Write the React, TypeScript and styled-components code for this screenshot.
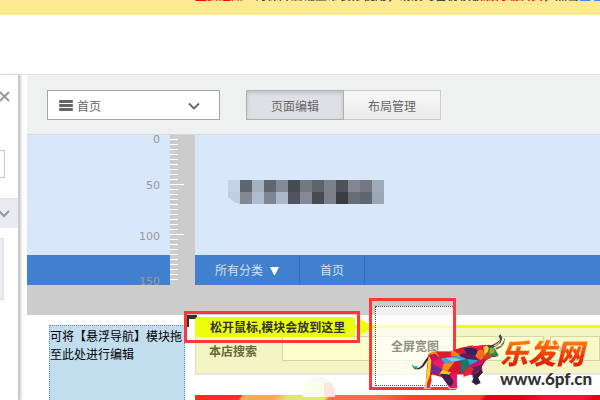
import React from "react";
import styled, { createGlobalStyle } from "styled-components";

const GlobalStyle = createGlobalStyle`
  *, *::before, *::after { box-sizing: border-box; }
  body {
    margin: 0;
    background: #fff;
    color: #555;
    font: 12px/18px "Liberation Sans", "Noto Sans CJK SC", sans-serif;
  }
  button, input, select { font: inherit; color: inherit; }
`;

const Page = styled.div`
  display: flex;
  flex-direction: column;
  height: 100vh;
  overflow: hidden;
`;

const Notice = styled.div`
  flex: none;
  height: 15px;
  padding-left: 195px;
  overflow: hidden;
  background: #ffea94;
  white-space: nowrap;
`;

const NoticeText = styled.p`
  margin: -13px 0 0;
  font-weight: bold;
  line-height: 18px;
  color: #444;
  em { color: #f00; font-style: normal; }
  a { color: #3d8be8; text-decoration: none; }
`;

const Header = styled.header`
  flex: none;
  height: 60px;
  border-bottom: 1px solid #e3e3e3;
`;

const Body = styled.div`
  display: flex;
  flex: 1;
  min-height: 0;
`;

const Sidebar = styled.aside`
  display: flex;
  flex: none;
  flex-direction: column;
  width: 20px;
  margin-right: 7px;
  border-right: 2px solid #c9c9c9;
  box-shadow: 1px 0 3px #ccc;
`;

const CloseButton = styled.button`
  display: flex;
  width: 11px;
  height: 11px;
  margin: 16px 0 48px;
  padding: 0;
  border: 0;
  background: none;
`;

const SideInput = styled.input`
  width: 5px;
  height: 28px;
  padding: 0;
  border: 1px solid #ccc;
  border-left: 0;
`;

const SideSection = styled.button`
  display: flex;
  align-items: center;
  width: 100%;
  height: 30px;
  margin: 20px 0 10px;
  padding: 0;
  border: 0;
  border-top: 1px solid #dcdde6;
  background: #ebecf1;
`;

const SideCard = styled.div`
  width: 4px;
  height: 62px;
  border: 1px solid #dcdde6;
  border-left: 0;
  background: #ebecf1;
`;

const Main = styled.main`
  display: flex;
  flex: 1;
  flex-direction: column;
  min-width: 0;
`;

const Toolbar = styled.div`
  display: flex;
  flex: none;
  align-items: center;
  gap: 26px;
  height: 60px;
  padding: 0 20px;
  border-bottom: 1px solid #d5d7de;
  background: #eff1f1;
`;

const PagePicker = styled.label`
  display: flex;
  align-items: center;
  gap: 4px;
  width: 173px;
  height: 30px;
  padding: 2px 19px 0 11px;
  border: 1px solid #a3a6a6;
  background: #fff;
`;

const Picker = styled.select`
  flex: 1;
  min-width: 0;
  padding: 2px 0 0;
  border: 0;
  appearance: none;
  background: none;
  color: #666;
`;

const Modes = styled.div`
  display: flex;
`;

const ModeButton = styled.button<{ $active?: boolean }>`
  width: ${(p) => (p.$active ? 98 : 97)}px;
  height: 30px;
  padding: 4px 0 0;
  border: 1px solid ${(p) => (p.$active ? "#aeb0b5" : "#ccc")};
  border-left-width: ${(p) => (p.$active ? 1 : 0)}px;
  background: ${(p) => (p.$active ? "#dfe0e5" : "linear-gradient(#f8f8f8, #ebebeb)")};
  box-shadow: ${(p) => (p.$active ? "inset 0 2px 4px #bfc1c6" : "none")};
  color: #666;
`;

const Stage = styled.section`
  display: grid;
  flex: none;
  grid-template-columns: 143px 25px 1fr;
  height: 180px;
  padding-bottom: 30px;
  background: #ccc;
`;

const Column = styled.div`
  position: relative;
  display: flex;
  flex-direction: column;
  min-width: 0;
  overflow: hidden;
  background: #d8e7fa;
`;

const Banner = styled.div`
  flex: 1;
  padding: 45px 33px;
`;

const NavBar = styled.nav`
  display: flex;
  height: 30px;
  background: #4080cf;
`;

const NavLink = styled.a`
  display: flex;
  align-items: center;
  gap: 7px;
  padding: 2px 20px 0;
  border-right: 1px solid #3570bd;
  color: #cfe0f5;
  text-decoration: none;
`;

const RulerLabel = styled.span<{ $at: number }>`
  position: absolute;
  top: ${(p) => p.$at}px;
  right: 10px;
  color: #999;
  font: 11px/12px "DejaVu Sans", sans-serif;
`;

const Ruler = styled.div`
  background:
    linear-gradient(#fff, #fff) 0 49px / 14px 1px no-repeat,
    linear-gradient(#fff, #fff) 0 99px / 14px 1px no-repeat,
    repeating-linear-gradient(transparent 0 4px, #fff 4px 5px) 0 0 / 8px 145px no-repeat;
`;

const Work = styled.section`
  position: relative;
  display: flex;
  flex: 1;
  gap: 10px;
  min-height: 0;
  padding: 10px 0 0 22px;
`;

const FloatZone = styled.div`
  flex: none;
  width: 136px;
  border: 1px dotted #399bc9;
  border-bottom: 0;
  background: #c1ddee;
  color: #000;
  padding-top: 2px;
`;

const Modules = styled.div`
  display: flex;
  flex: 1;
  flex-direction: column;
  gap: 20px;
  min-width: 0;
`;

const SearchRow = styled.form`
  display: flex;
  flex: none;
  height: 50px;
  padding-top: 8px;
  border-top: 3px solid #ecff0a;
  border-bottom: 2px solid #e5e5e0;
  border-left: 1px solid #e9d7b5;
  background: #f3f6c4;
`;

const SearchLabel = styled.label`
  width: 86px;
  padding: 7px 0 0 13px;
  color: #67683a;
  font-weight: bold;
`;

const Field = styled.input<{ $grow?: boolean }>`
  flex: ${(p) => (p.$grow ? "1 1 0" : "0 0 50px")};
  min-width: 0;
  height: 25px;
  margin-right: ${(p) => (p.$grow ? 6 : 0)}px;
  padding: 0 6px;
  border: 1px solid #d4d6a8;
  background: ${(p) => (p.$grow ? "#fcfecb" : "#f6f9c8")};
  &::placeholder { color: #bfc19c; opacity: 1; }
`;

const Poster = styled.div`
  flex: none;
  height: 5px;
  background: linear-gradient(
    125deg,
    #ff2c1c 0 38px, #ffa94c 40px 66px, #dfe96b 78px 108px,
    #ff6a4c 112px 150px, #f7432b 180px 235px, #e10717 240px 270px,
    #ef1539 290px 320px, #e10717 330px
  );
`;

const Dome = styled.div`
  position: absolute;
  top: 62px;
  left: 276px;
  width: 32px;
  height: 20px;
  border-radius: 16px 16px 0 0;
  background: linear-gradient(#f8f8f4 0 6px, transparent 6px), linear-gradient(90deg, #f9ffe6 0 21px, #fce6dd 21px);
`;

const DropHint = styled.div`
  position: absolute;
  top: 2px;
  left: 168px;
  width: 160px;
  height: 20px;
  padding: 1px 0 0 15px;
  border-radius: 3px;
  background: #ecff0a;
  color: #333;
  font-weight: bold;
  line-height: 20px;
  white-space: nowrap;
`;

const Corner = styled.div`
  position: absolute;
  top: 0;
  left: 160px;
  width: 10px;
  height: 12px;
  border-top: 4px solid #333;
  border-left: 2px solid #333;
`;

const Arrow = styled.svg`
  position: absolute;
  top: 3px;
  left: 331px;
`;

const Mark = styled.div<{ $x: number; $y: number; $w: number; $h: number }>`
  position: absolute;
  top: ${(p) => p.$y}px;
  left: ${(p) => p.$x}px;
  width: ${(p) => p.$w}px;
  height: ${(p) => p.$h}px;
  border: 3px solid #ff373b;
`;

const DragCard = styled.div`
  position: absolute;
  top: -9px;
  left: 348px;
  width: 80px;
  height: 80px;
  border: 1px dotted #444;
  background: rgba(255, 255, 255, 0.7);
  color: #91927f;
  font-weight: bold;
  line-height: 80px;
  text-align: center;
`;

const Brand = styled.div`
  position: absolute;
  top: 10px;
  left: 383px;
  display: flex;
  align-items: flex-start;
`;

const BrandWords = styled.div`
  display: flex;
  flex-direction: column;
  margin-left: -10px;
  padding-top: 10px;
`;

const BrandName = styled.strong`
  background: linear-gradient(#ff7a12 20%, #ee3c08 60%, #d41600);
  background-clip: text;
  color: transparent;
  font: italic 900 28px/34px "Noto Sans CJK SC", sans-serif;
`;

const BrandUrl = styled.span`
  color: #333;
  font: 900 17px/20px Lato, sans-serif;
`;

const Chevron = () => (
  <svg width="12" height="8" viewBox="0 0 12 8" fill="none" stroke="#666" strokeWidth="1.8" aria-hidden="true">
    <path d="M1 1.5 6 6.5 11 1.5" />
  </svg>
);

const tiles = [
  ["#c5d3e6", "#60666f", "#a5b1c1", "#60666f", "#868a96", "#484b52", "#737981", "#5e646b", "#7b808a", "#4d5158", "#818692", "#747981", "#9fabba"],
  ["#c1cfe2", "#838893", "#afbbce", "#808593", "#acb7ca", "#52545d", "#858997", "#494b54", "#7b808a", "#3b3c40", "#676c75", "#60666f", "#9ba7b4"],
];

const Signboard = () => (
  <svg width="156" height="24" viewBox="0 0 156 24" shapeRendering="crispEdges" aria-hidden="true">
    {tiles.map((row, y) =>
      row.map((fill, x) => <rect key={`${x}-${y}`} x={x * 12} y={y * 12} width="12" height="12" fill={fill} />)
    )}
    <path d="M0 17 4 21 11 24H0Z" fill="#d8e7fa" />
  </svg>
);

const facets: [string, string][] = [
  ["#3b2330", "5,118 12,128 24,130 35,122 46,105 60,86 82,78 82,84 66,90 52,108 40,125 28,133 14,133"],
  ["#27a79a", "5,118 13,124 24,124 20,131 10,130"],
  ["#f08a1c", "56,84 80,78 102,82 88,99 66,106 54,130"],
  ["#c2155c", "56,90 76,86 90,100 68,112 62,148 50,138"],
  ["#e8262c", "50,136 62,146 65,166 58,190 45,190 51,166"],
  ["#fbd914", "56,92 64,106 60,150 52,172 50,190 45,190 50,150"],
  ["#e0192d", "78,80 130,80 122,94 90,100"],
  ["#ff7a20", "124,78 160,70 150,94 122,94"],
  ["#e51730", "128,76 152,68 192,60 176,72 148,88"],
  ["#35a8df", "92,100 150,92 176,102 132,110 104,116"],
  ["#84cbe2", "106,99 134,98 154,104 128,110"],
  ["#e91e6a", "88,100 106,116 96,140 66,128 70,108"],
  ["#752a8f", "68,116 100,134 84,148 62,146"],
  ["#f28a22", "100,116 134,110 118,140 96,138"],
  ["#d8142a", "134,110 160,122 142,148 110,142"],
  ["#fac51c", "96,136 124,142 110,154 88,148"],
  ["#17796c", "154,106 174,102 180,124 150,144"],
  ["#2d2460", "160,70 182,68 206,74 196,92 172,86"],
  ["#5d1a62", "148,88 172,84 196,94 206,108 180,106 150,94"],
  ["#20a8c9", "172,102 204,106 190,122 180,122"],
  ["#ec1f3a", "186,64 228,60 212,80 204,76"],
  ["#f36e21", "204,76 218,74 228,94 212,106 196,94"],
  ["#ffcf1a", "220,66 238,58 236,78 224,90"],
  ["#c4166d", "178,120 212,105 216,124 194,134 174,150"],
  ["#54205d", "186,128 216,120 212,134 196,142 200,158 188,158"],
  ["#30224e", "96,148 118,150 134,160 128,186 114,176"],
  ["#ed1564", "118,148 142,142 138,168 142,190 122,190 130,170"],
  ["#432052", "90,146 112,148 128,164 116,182 98,158"],
  ["#26233c", "194,150 212,134 218,142 204,158 212,174 198,180 188,166"],
  ["#e82136", "162,138 180,124 192,132 178,150 160,156"],
  ["#2e1f42", "194,166 204,172 196,178 184,170"],
  ["#46823b", "236,70 254,70 264,88 258,94 246,90 240,102 230,94"],
  ["#8dac39", "240,62 252,66 254,82 238,88"],
  ["#e53625", "234,84 242,96 226,104 218,96"],
  ["#2b8564", "246,90 262,84 266,92 256,96"],
  ["#47444b", "236,68 230,60 246,60 258,54 270,44 266,32 272,28 277,40 272,54 258,64 248,68"],
  ["#736f60", "256,68 272,62 282,46 281,38 285,42 282,56 272,68 258,74"],
  ["#e2d7a5", "250,62 264,54 272,44 268,55 256,64"],
];

const Bull = () => (
  <svg width="100" height="75" viewBox="0 0 300 225" aria-hidden="true">
    <path
      d="M54 88 80 78 130 78 160 68 226 58 242 60 262 85 258 97 244 98 228 108 217 126 220 142 206 158 212 174 198 181 184 170 194 154 180 150 142 150 142 190 118 190 96 158 66 150 60 190 44 190Z"
      fill="#c71847"
      stroke="#fff"
      strokeWidth="3"
    />
    {facets.map(([fill, points]) => (
      <polygon key={points} points={points} fill={fill} />
    ))}
  </svg>
);

export default function App() {
  return (
    <Page>
      <GlobalStyle />
      <Notice>
        <NoticeText>
          <em>重要通知：</em>为保障店铺正常装修使用，请及时备份模板<em>后再编辑页</em>，点击<a href="#help">查看详</a>
        </NoticeText>
      </Notice>
      <Header />
      <Body>
        <Sidebar>
          <CloseButton aria-label="关闭">
            <svg width="11" height="11" viewBox="0 0 11 11" stroke="#999" strokeWidth="2" aria-hidden="true">
              <path d="M0 1 9 10M9 1 0 10" />
            </svg>
          </CloseButton>
          <SideInput aria-label="搜索模块" />
          <SideSection aria-label="展开">
            <svg width="10" height="8" viewBox="0 0 10 8" fill="none" stroke="#999" strokeWidth="2" aria-hidden="true">
              <path d="M-1 1 4 6 9 1" />
            </svg>
          </SideSection>
          <SideCard />
        </Sidebar>
        <Main>
          <Toolbar>
            <PagePicker>
              <svg width="14" height="11" viewBox="0 0 14 11" fill="#666" aria-hidden="true">
                <rect width="14" height="3" rx="1" />
                <rect y="4" width="14" height="3" rx="1" />
                <rect y="8" width="14" height="3" rx="1" />
              </svg>
              <Picker aria-label="页面">
                <option>首页</option>
              </Picker>
              <Chevron />
            </PagePicker>
            <Modes>
              <ModeButton type="button" $active>页面编辑</ModeButton>
              <ModeButton type="button">布局管理</ModeButton>
            </Modes>
          </Toolbar>
          <Stage>
            <Column>
              <Banner />
              <NavBar as="div" />
              <RulerLabel $at={-1}>0</RulerLabel>
              <RulerLabel $at={45}>50</RulerLabel>
              <RulerLabel $at={96}>100</RulerLabel>
              <RulerLabel $at={141}>150</RulerLabel>
            </Column>
            <Ruler />
            <Column>
              <Banner>
                <Signboard />
              </Banner>
              <NavBar>
                <NavLink href="#all">
                  所有分类
                  <svg width="9" height="8" viewBox="0 0 9 8" fill="#fff" aria-hidden="true">
                    <path d="M0 0H9L5 8H4Z" />
                  </svg>
                </NavLink>
                <NavLink href="#home">首页</NavLink>
              </NavBar>
            </Column>
          </Stage>
          <Work>
            <FloatZone>可将【悬浮导航】模块拖至此处进行编辑</FloatZone>
            <Modules>
              <SearchRow>
                <SearchLabel htmlFor="keyword">本店搜索</SearchLabel>
                <Field id="keyword" $grow />
                <Field aria-label="价格" placeholder="¥" />
              </SearchRow>
              <Poster />
            </Modules>
            <Dome />
            <Corner />
            <DropHint>松开鼠标,模块会放到这里</DropHint>
            <Arrow width="17" height="18" viewBox="0 0 17 18" fill="#ecff0a" aria-hidden="true">
              <path d="M0 0 17 9 0 18Z" />
            </Arrow>
            <DragCard>全屏宽图</DragCard>
            <Mark $x={157} $y={-4} $w={176} $h={32} />
            <Mark $x={342} $y={-17} $w={87} $h={92} />
            <Brand>
              <Bull />
              <BrandWords>
                <BrandName>乐发网</BrandName>
                <BrandUrl>www.6pf.cn</BrandUrl>
              </BrandWords>
            </Brand>
          </Work>
        </Main>
      </Body>
    </Page>
  );
}
